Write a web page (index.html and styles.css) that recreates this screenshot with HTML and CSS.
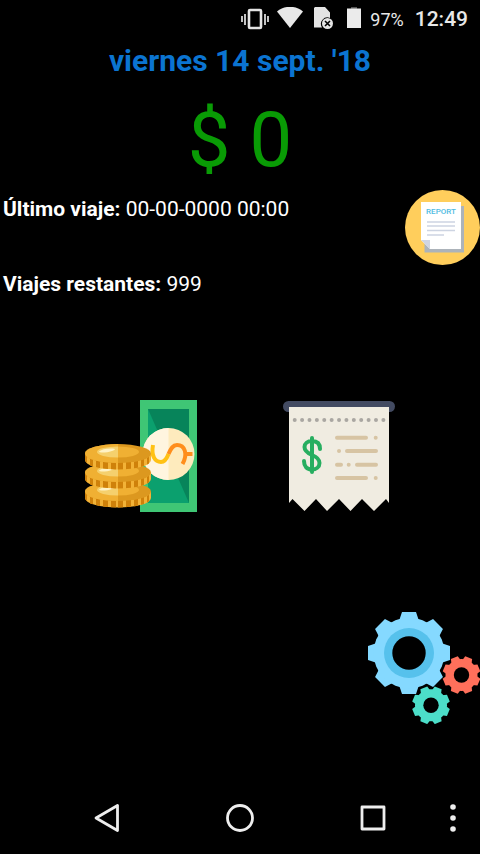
FILE: index.html
```html
<!DOCTYPE html>
<html lang="es">
<head>
<meta charset="utf-8">
<meta name="viewport" content="width=device-width, initial-scale=1">
<title>Viajes</title>
<link rel="stylesheet" href="styles.css">
</head>
<body>
<header class="status">
  <svg class="status-vibrate" width="28" height="24" viewBox="0 0 28 24" aria-hidden="true">
    <rect x="8" y="3" width="12" height="18" rx="1" fill="none" stroke="#e4e4e4" stroke-width="2.6"/>
    <path d="M1 9v6M4 7v11M24 7v11M27 9v6" stroke="#e4e4e4" stroke-width="1.7"/>
  </svg>
  <svg class="status-wifi" width="26" height="24" viewBox="0 0 26 24" aria-hidden="true">
    <path d="M0 4.500C7.500-1.800 18.500-1.800 26 4.500L13 21Z" fill="#e8e8e8"/>
  </svg>
  <svg class="status-sim" width="20" height="24" viewBox="0 0 20 24" aria-hidden="true">
    <path d="M1 0H11L16 5.500V11A6.500 6.500 0 0 0 8 20.500H0V1Z" fill="#e4e4e4"/>
    <circle cx="13.500" cy="16.500" r="5.500" fill="#e4e4e4"/>
    <path d="M11 14l5 5M16 14l-5 5" stroke="#000" stroke-width="1.600"/>
  </svg>
  <svg class="status-battery" width="14" height="24" viewBox="0 0 14 24" aria-hidden="true">
    <path d="M4 0h6v2H4Z" fill="#555"/>
    <path d="M0 1.500h14V21H0Z" fill="#ebebeb"/>
  </svg>
  <span class="status-percent">97%</span>
  <time class="status-time">12:49</time>
</header>

<main class="app">
  <h1 class="date">viernes 14 sept. '18</h1>
  <p class="amount">$ 0</p>

  <section class="info">
    <div class="facts">
      <p class="fact"><strong>Último viaje:</strong> 00-00-0000 00:00</p>
      <p class="fact"><strong>Viajes restantes:</strong> 999</p>
    </div>
    <button class="icon-button" type="button" aria-label="Reporte">
      <svg width="75" height="75" viewBox="0 0 75 75">
        <circle cx="37.500" cy="37.500" r="37.500" fill="#ffce5c"/>
        <path d="M19.500 16H59V62.500H19.500Z" fill="#acb3ba"/>
        <path d="M16 12H56V59H25L16 50Z" fill="#fff"/>
        <path d="M16 50H25V59Z" fill="#cfd5e2"/>
        <path d="M22 32H50M22 36H50M22 40.500H50M22 45H39" stroke="#cdd4e2" stroke-width="1.700"/>
        <text class="report-label" x="36" y="24" text-anchor="middle">REPORT</text>
      </svg>
    </button>
  </section>

  <section class="actions">
    <button class="icon-button" type="button" aria-label="Cobrar">
      <svg width="112" height="112" viewBox="0 0 112 112">
        <defs>
          <clipPath id="side"><path d="M0 54V60A33 9.500 0 0 0 66 60V54Z"/></clipPath>
          <clipPath id="left-half"><path d="M0 40H33V110H0Z"/></clipPath>
          <g id="coin">
            <path d="M0 54V60A33 9.500 0 0 0 66 60V54Z" fill="#f2b237"/>
            <path clip-path="url(#side)" d="M0 54h2v20H0ZM5 54h3v20H5ZM11 54h4v20h-4ZM18 54h5v20h-5ZM26 54h5v20h-5ZM33 54h5v20h-5ZM41 54h5v20h-5ZM49 54h4v20h-4ZM56 54h3v20h-3ZM62 54h2v20h-2Z" fill="#cf810a"/>
            <ellipse cx="33" cy="53.500" rx="33" ry="9.500" fill="#dc981f"/>
            <ellipse cx="33" cy="53.500" rx="33" ry="9.500" fill="#f0b033" clip-path="url(#left-half)"/>
            <ellipse cx="33" cy="52" rx="21" ry="5.500" fill="#f0b033"/>
            <ellipse cx="33" cy="52" rx="21" ry="5.500" fill="#f5d06d" clip-path="url(#left-half)"/>
            <ellipse cx="22" cy="50.500" rx="8" ry="1.700" fill="#fff2c4" transform="rotate(-9 22 50.500)"/>
          </g>
        </defs>
        <path d="M55 0H112V112H55Z" fill="#3fc675"/>
        <path d="M63 9H104V103H63Z" fill="#0ba06e"/>
        <path d="M63 9H104V103Z" fill="#07845a"/>
        <circle cx="83.500" cy="54" r="26" fill="#feebbd"/>
        <path d="M83.500 28a26 26 0 0 0 0 52Z" fill="#fff5df"/>
        <path d="M68 45C66 56 70 62 76 62C80 62 82 58 83.500 54" fill="none" stroke="#ffc114" stroke-width="4"/>
        <path d="M83.500 54C86 48 88 45 92 45C100 45 103 54 97.500 64M100 54H107.500" fill="none" stroke="#ff8e1c" stroke-width="4"/>
        <use href="#coin" y="38"/>
        <use href="#coin" y="19"/>
        <use href="#coin"/>
      </svg>
    </button>
    <button class="icon-button" type="button" aria-label="Recibo">
      <svg width="112" height="112" viewBox="0 0 112 112">
        <rect y="1" width="112" height="11" rx="5.500" fill="#434b62"/>
        <path d="M6 7H106V103L103 99L91 111L79 99L67.500 111L56 99L44 111L33 99L21.500 111L9.500 99L6 103Z" fill="#f0ece1"/>
        <path d="M11.700 20H101" fill="none" stroke="#aaa7a2" stroke-width="4" stroke-linecap="round" stroke-dasharray="0 7.390"/>
        <path d="M29 38V72M37 49C37 43 33.500 41 29 41C24.500 41 21.500 43.500 21.500 47C21.500 51 24.500 53 29 55C34 57 36.500 59 36.500 63C36.500 67 33 69.500 29 69.500C24 69.500 21 66.500 21 61" fill="none" stroke="#27ae60" stroke-width="4" stroke-linecap="round"/>
        <path d="M54 37.700H83M92.700 37.700h.01M56 51h.01M64 51H93M54 64.700H58M65.700 64.700h.01M74 64.700H93M54 78H83M92.700 78h.01" stroke="#d7c4a3" stroke-width="4" stroke-linecap="round"/>
      </svg>
    </button>
  </section>

  <section class="settings">
    <button class="icon-button" type="button" aria-label="Ajustes">
      <svg width="112" height="112" viewBox="0 0 112 112">
        <defs>
          <path id="big-tooth" d="M-10-32L-9-35L-7-41H7L9-35L10-32Z"/>
          <g id="big-teeth">
            <use href="#big-tooth"/><use href="#big-tooth" transform="rotate(45)"/><use href="#big-tooth" transform="rotate(90)"/><use href="#big-tooth" transform="rotate(135)"/><use href="#big-tooth" transform="rotate(180)"/><use href="#big-tooth" transform="rotate(225)"/><use href="#big-tooth" transform="rotate(270)"/><use href="#big-tooth" transform="rotate(315)"/>
          </g>
          <path id="small-tooth" d="M-5-14L-3.700-18.800H3.700L5-14Z"/>
          <g id="small-gear">
            <use href="#small-tooth" transform="rotate(22.500)"/><use href="#small-tooth" transform="rotate(67.500)"/><use href="#small-tooth" transform="rotate(112.500)"/><use href="#small-tooth" transform="rotate(157.500)"/><use href="#small-tooth" transform="rotate(202.500)"/><use href="#small-tooth" transform="rotate(247.500)"/><use href="#small-tooth" transform="rotate(292.500)"/><use href="#small-tooth" transform="rotate(337.500)"/>
            <circle r="16"/>
            <circle r="7.700" fill="#000"/>
          </g>
        </defs>
        <g transform="translate(41 41)" fill="#85d9ff">
          <use href="#big-teeth"/>
          <circle r="35.500"/>
          <circle r="25" fill="#56c1ec"/>
          <circle r="16.700" fill="#000"/>
        </g>
        <use href="#small-gear" transform="translate(93.500 63)" fill="#ff705b"/>
        <use href="#small-gear" transform="translate(63 93.300)" fill="#4cdec9"/>
      </svg>
    </button>
  </section>
</main>

<nav class="navbar">
  <button class="nav-button nav-back" type="button" aria-label="Atrás">
    <svg width="30" height="30" viewBox="0 0 30 30"><path d="M25.500 2.500V27.500L4 15Z" fill="none" stroke="#eee" stroke-width="2.800" stroke-linejoin="round"/></svg>
  </button>
  <button class="nav-button" type="button" aria-label="Inicio">
    <svg width="30" height="30" viewBox="0 0 30 30"><circle cx="15" cy="15" r="12.500" fill="none" stroke="#eee" stroke-width="2.800"/></svg>
  </button>
  <button class="nav-button" type="button" aria-label="Recientes">
    <svg width="30" height="30" viewBox="0 0 30 30"><rect x="4" y="4" width="22" height="22" fill="none" stroke="#eee" stroke-width="2.800" stroke-linejoin="round"/></svg>
  </button>
  <button class="nav-button nav-menu" type="button" aria-label="Menú">
    <svg width="26" height="30" viewBox="0 0 26 30"><path d="M13 4h.01M13 15h.01M13 26h.01" stroke="#eee" stroke-width="5.600" stroke-linecap="round"/></svg>
  </button>
</nav>
</body>
</html>
```
FILE: styles.css
```css
* {
  box-sizing: border-box;
}

body {
  margin: 0;
  min-height: 100vh;
  display: flex;
  flex-direction: column;
  background: #000;
  color: #fff;
  font-family: Roboto, "Noto Sans", sans-serif;
}

h1,
p {
  margin: 0;
}

svg {
  display: block;
}

button {
  padding: 0;
  border: 0;
  background: none;
  color: inherit;
  font: inherit;
  cursor: pointer;
}

.status {
  display: flex;
  align-items: center;
  justify-content: flex-end;
  height: 38px;
  padding-right: 12px;
  color: #e8e8e8;
}

.status-wifi {
  margin-left: 8px;
}

.status-sim {
  margin-left: 11px;
}

.status-battery {
  margin-left: 13px;
}

.status-percent {
  margin-left: 9px;
  font-size: 18px;
}

.status-time {
  margin-left: 11px;
  font-size: 21px;
  font-weight: 500;
}

.app {
  flex: 1;
  display: flex;
  flex-direction: column;
}

.date {
  padding-top: 3px;
  color: #0b74d1;
  font-size: 30px;
  line-height: 40px;
  font-weight: 700;
  text-align: center;
}

.amount {
  padding-top: 14px;
  color: #099b05;
  font-size: 76px;
  line-height: 90px;
  text-align: center;
}

.info {
  display: flex;
  justify-content: space-between;
  align-items: flex-start;
  padding-top: 5px;
}

.facts {
  padding-left: 3px;
}

.fact {
  height: 75px;
  padding-top: 6px;
  font-size: 21px;
  line-height: 26px;
}

.report-label {
  fill: #4fbbe2;
  font-size: 8px;
  font-weight: 500;
}

.actions {
  display: flex;
  justify-content: space-evenly;
  padding-top: 60px;
}

.settings {
  display: flex;
  justify-content: flex-end;
  padding-top: 100px;
}

.navbar {
  display: grid;
  grid-template-columns: 1fr 1fr 1fr 40px;
  align-items: center;
  height: 72px;
  padding-left: 40px;
}

.nav-button {
  display: flex;
  justify-content: center;
}

.nav-menu {
  justify-content: flex-start;
}
```
